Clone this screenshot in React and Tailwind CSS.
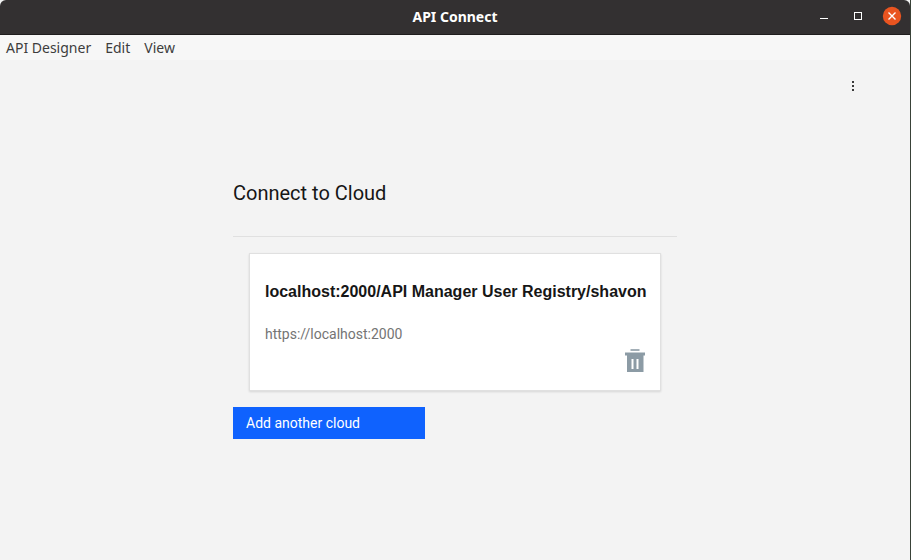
function TitleBar() {
  return (
    <header className="grid h-[35px] grid-cols-[1fr_auto_1fr] items-center rounded-t-md border-b border-[#1f1d1d] bg-[#333031] px-[7px]">
      <span />
      <h1 className="font-['Noto_Sans',sans-serif] text-[14px] leading-5 font-bold text-white">API Connect</h1>
      <div className="flex items-center justify-end gap-3">
        <button type="button" aria-label="Minimize" className="flex size-[22px] items-center justify-center text-white">
          <svg width="12" height="12" viewBox="0 0 12 12" shapeRendering="crispEdges">
            <path d="M2 7h8v1H2z" fill="currentColor" />
          </svg>
        </button>
        <button type="button" aria-label="Maximize" className="flex size-[22px] items-center justify-center text-white">
          <svg width="8" height="10" viewBox="0 0 8 10" shapeRendering="crispEdges">
            <path d="M0 0h8v8H0zM1 1v6h6V1z" fill="currentColor" fillRule="evenodd" />
          </svg>
        </button>
        <button type="button" aria-label="Close" className="flex size-[22px] items-center justify-center text-white">
          <svg width="22" height="24" viewBox="0 0 22 24">
            <circle cx="11" cy="11" r="9.2" fill="#e95420" />
            <path d="M7.5 7.5l7 7M14.5 7.5l-7 7" stroke="currentColor" strokeWidth="1.4" />
          </svg>
        </button>
      </div>
    </header>
  );
}

function MenuBar() {
  return (
    <nav className="flex h-[25px] items-center gap-3.5 bg-[#f7f7f7] px-1.5 font-['Noto_Sans',sans-serif] text-[14px] leading-5 text-[#3d3d3d]">
      <button type="button">API Designer</button>
      <button type="button">Edit</button>
      <button type="button">View</button>
    </nav>
  );
}

function TrashIcon() {
  return (
    <svg width="20" height="24" viewBox="0 0 20 24" fill="#8c9ba5">
      <path d="M5.5 0h9v2h-9z" opacity="0.8" />
      <path d="M0 3.5h20v3h-1.5v16.5H2V6.5H0zM6.5 10v10h2V10zM11.5 10v10h2V10z" fillRule="evenodd" />
    </svg>
  );
}

function CloudCard({ name, url }) {
  return (
    <article className="mx-4 mt-4 flex flex-col border border-[#e0e0e0] bg-white px-[15px] pt-[26px] pb-[17px] shadow-[0_1px_2px_rgba(0,0,0,0.12)]">
      <h3 className="font-['Liberation_Sans',sans-serif] text-[16px] leading-6 font-bold whitespace-nowrap text-[#161616]">{name}</h3>
      <p className="mt-5 text-[14px] leading-5 text-[#747474]">{url}</p>
      <button type="button" aria-label="Delete cloud" className="mt-[5px] self-end">
        <TrashIcon />
      </button>
    </article>
  );
}

export default function App() {
  return (
    <div className="min-h-screen bg-[#394238] pr-px">
      <div className="flex min-h-screen flex-col bg-[#f3f3f3]">
        <TitleBar />
        <MenuBar />
        <main className="flex flex-col font-[Roboto,sans-serif]">
          <div className="flex justify-end pt-4 pr-[47px]">
            <button type="button" aria-label="More options" className="flex size-5 items-center justify-center">
              <svg width="4" height="12" viewBox="0 0 4 12" fill="#393939">
                <path d="M1 1h2v2H1zM1 5h2v2H1zM1 9h2v2H1z" />
              </svg>
            </button>
          </div>
          <section className="mx-auto mt-[83px] w-full max-w-[444px]">
            <h2 className="border-b border-[#e0e0e0] pb-[29px] text-[20px] leading-7 text-[#161616]">Connect to Cloud</h2>
            <CloudCard name="localhost:2000/API Manager User Registry/shavon" url="https://localhost:2000" />
            <button type="button" className="mt-4 flex h-8 w-48 items-center bg-[#0f62fe] px-[13px] text-[14px] leading-5 text-white">
              Add another cloud
            </button>
          </section>
        </main>
      </div>
    </div>
  );
}
